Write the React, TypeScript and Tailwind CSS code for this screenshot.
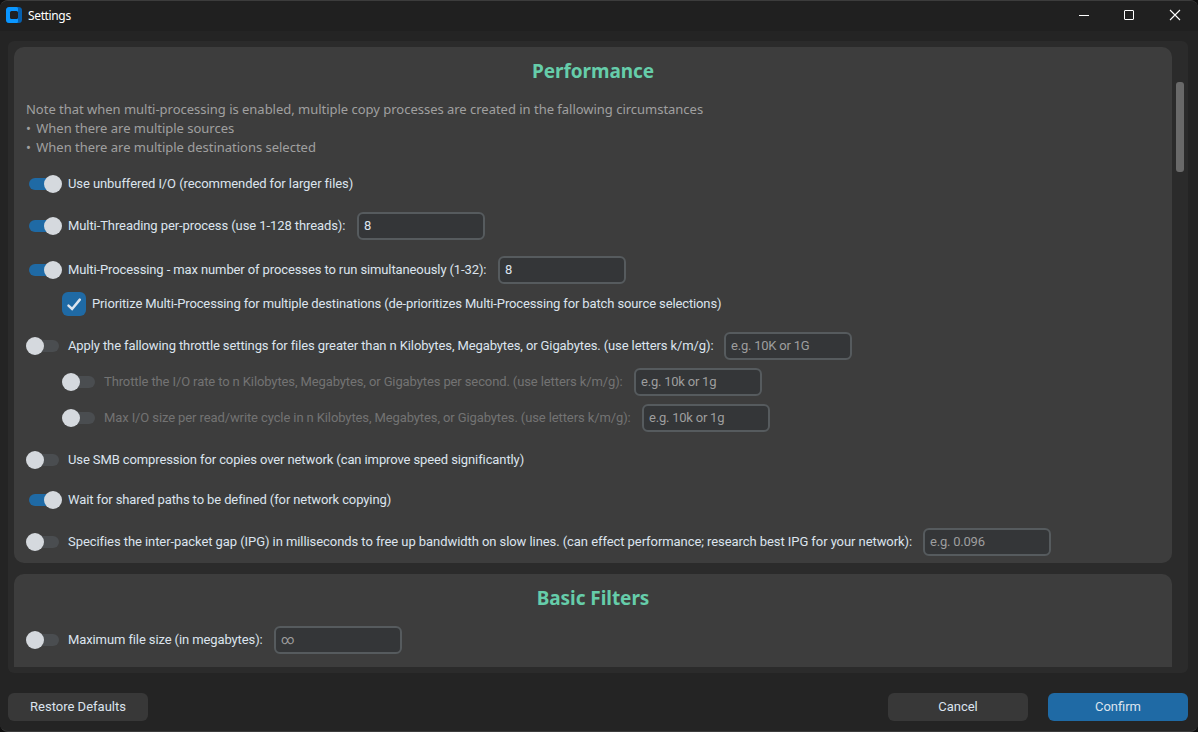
import { ReactNode } from 'react';

function Toggle({ on = false }: { on?: boolean }) {
  return (
    <span className="relative block h-[18px] w-9 shrink-0">
      <span className={on ? 'absolute top-[3px] left-[3px] h-3 w-[30px] rounded-full bg-[#1f6aa5]' : 'absolute top-[3px] left-[3px] h-3 w-[30px] rounded-full bg-[#4a4d50]'} />
      <span className={on ? 'absolute top-0 left-[18px] size-[18px] rounded-full bg-[#d5d9de]' : 'absolute top-0 left-0 size-[18px] rounded-full bg-[#d5d9de]'} />
    </span>
  );
}

function Entry({ value, placeholder }: { value?: string; placeholder?: string }) {
  return (
    <input
      className="h-7 w-32 shrink-0 rounded-md border-2 border-[#565b5e] bg-[#343638] px-[5px] pb-0.5 text-[13px] tracking-[-0.22px] text-[#dce4ee] outline-none placeholder:text-[#9e9e9e] placeholder:opacity-100"
      defaultValue={value}
      placeholder={placeholder}
    />
  );
}

type RowProps = { gap: string; text: string; on?: boolean; nested?: boolean; label: string; children?: ReactNode };

function Row({ gap, text, on, nested, label, children }: RowProps) {
  return (
    <div className={`flex h-7 items-center ${nested ? 'pl-12' : 'pl-3'} ${gap}`}>
      <Toggle on={on} />
      <span className={`ml-1.5 shrink-0 whitespace-nowrap ${nested ? 'text-[#737373]' : 'text-[#dce4ee]'} ${text}`}>{label}</span>
      {children}
    </div>
  );
}

function Heading({ children }: { children: ReactNode }) {
  return (
    <h2 className="flex h-12 items-center justify-center font-['Noto_Sans',sans-serif] text-[19px] font-bold tracking-[-0.06px] text-[#66cdaa]">
      {children}
    </h2>
  );
}

function Bullet({ children }: { children: ReactNode }) {
  return (
    <p>
      <span className="mr-0.5">•</span> {children}
    </p>
  );
}

export default function App() {
  return (
    <div className="h-[732px] w-[1198px] overflow-hidden bg-[#101010] font-[Roboto,sans-serif] text-[13px]">
      <div className="flex h-full flex-col overflow-hidden rounded-lg border-y border-[#3c3c3c] bg-[#242424]">
        <header className="flex h-[30px] shrink-0 items-center bg-[#202020] pb-0.5 pl-1.5">
          <svg width="16" height="16" viewBox="0 0 16 16">
            <rect width="16" height="16" rx="3.5" fill="#0560b0" />
            <path d="M3.5 0H10.5Q12 0 12 1.5V14.5Q12 16 10.5 16H3.5A3.5 3.5 0 0 1 0 12.5V3.5A3.5 3.5 0 0 1 3.5 0Z" fill="#0a96ff" />
            <rect x="4" y="4" width="8" height="8" rx="1.5" fill="#202020" />
          </svg>
          <span className="mt-0.5 ml-1.5 font-['Noto_Sans',sans-serif] text-xs tracking-[-0.36px] text-white">Settings</span>
          <svg className="mr-[17px] ml-auto" width="102" height="12" viewBox="0 0 102 12" fill="none" stroke="#fff">
            <path d="M0 6.5H10" />
            <rect x="45.5" y="1.5" width="9" height="9" rx="0.5" />
            <path d="M91 1L101 11M101 1L91 11" strokeWidth="1.1" />
          </svg>
        </header>
        <main className="mx-2 mt-2.5 flex h-[632px] w-[1180px] shrink-0 rounded-md bg-[#2b2b2b] py-1.5 pr-1 pl-1.5">
          <div className="h-[620px] w-[1158px] shrink-0 overflow-hidden">
            <section className="h-[516px] rounded-[10px] bg-[#3d3d3d]">
              <Heading>Performance</Heading>
              <div className="mt-[5px] pl-3 font-['Noto_Sans',sans-serif] text-[13px] leading-[19px] tracking-[-0.02px] text-[#a0a0a0]">
                <p>Note that when multi-processing is enabled, multiple copy processes are created in the fallowing circumstances</p>
                <Bullet>When there are multiple sources</Bullet>
                <Bullet>When there are multiple destinations selected</Bullet>
              </div>
              <Row gap="mt-[13px]" text="tracking-[-0.08px]" on label="Use unbuffered I/O (recommended for larger files)" />
              <Row gap="mt-3.5" text="w-[289px] tracking-[-0.085px]" on label="Multi-Threading per-process (use 1-128 threads):">
                <Entry value="8" />
              </Row>
              <Row gap="mt-4" text="w-[430px] tracking-[-0.111px]" on label="Multi-Processing - max number of processes to run simultaneously (1-32):">
                <Entry value="8" />
              </Row>
              <div className="mt-1.5 flex h-7 items-center pl-12">
                <span className="size-6 rounded-md bg-[#1f6aa5]">
                  <svg width="24" height="24" viewBox="0 0 24 24" fill="none" stroke="#dce4ee" strokeWidth="2.5" strokeLinecap="round">
                    <path d="M6.5 13.6L10.1 17L17.8 7.6" />
                  </svg>
                </span>
                <span className="ml-1.5 whitespace-nowrap tracking-[-0.126px] text-[#dce4ee]">
                  Prioritize Multi-Processing for multiple destinations (de-prioritizes Multi-Processing for batch source selections)
                </span>
              </div>
              <Row gap="mt-3.5" text="w-[656px] tracking-[-0.108px]" label="Apply the fallowing throttle settings for files greater than n Kilobytes, Megabytes, or Gigabytes. (use letters k/m/g):">
                <Entry placeholder="e.g. 10K or 1G" />
              </Row>
              <Row gap="mt-2" text="w-[530px] tracking-[-0.11px]" nested label="Throttle the I/O rate to n Kilobytes, Megabytes, or Gigabytes per second. (use letters k/m/g):">
                <Entry placeholder="e.g. 10k or 1g" />
              </Row>
              <Row gap="mt-2" text="w-[538px] tracking-[-0.106px]" nested label="Max I/O size per read/write cycle in n Kilobytes, Megabytes, or Gigabytes. (use letters k/m/g):">
                <Entry placeholder="e.g. 10k or 1g" />
              </Row>
              <Row gap="mt-3.5" text="tracking-[-0.106px]" label="Use SMB compression for copies over network (can improve speed significantly)" />
              <Row gap="mt-3" text="tracking-[-0.108px]" on label="Wait for shared paths to be defined (for network copying)" />
              <Row gap="mt-3.5" text="w-[855px] tracking-[-0.069px]" label="Specifies the inter-packet gap (IPG) in milliseconds to free up bandwidth on slow lines. (can effect performance; research best IPG for your network):">
                <Entry placeholder="e.g. 0.096" />
              </Row>
            </section>
            <section className="mt-[11px] h-[200px] rounded-[10px] bg-[#3d3d3d]">
              <Heading>Basic Filters</Heading>
              <Row gap="mt-1" text="w-[206px] tracking-[-0.106px]" label="Maximum file size (in megabytes):">
                <Entry placeholder="∞" />
              </Row>
            </section>
          </div>
          <div className="mt-[35px] ml-1 h-[90px] w-2 shrink-0 rounded-[3px] bg-[#696969]" />
        </main>
        <footer className="mx-2 mt-5 flex w-[1180px] gap-5 text-[#dce4ee]">
          <button className="mr-auto h-7 w-[140px] rounded-md bg-[#383838]">Restore Defaults</button>
          <button className="h-7 w-[140px] rounded-md bg-[#383838]">Cancel</button>
          <button className="h-7 w-[140px] rounded-md bg-[#1f6aa5]">Confirm</button>
        </footer>
      </div>
    </div>
  );
}
